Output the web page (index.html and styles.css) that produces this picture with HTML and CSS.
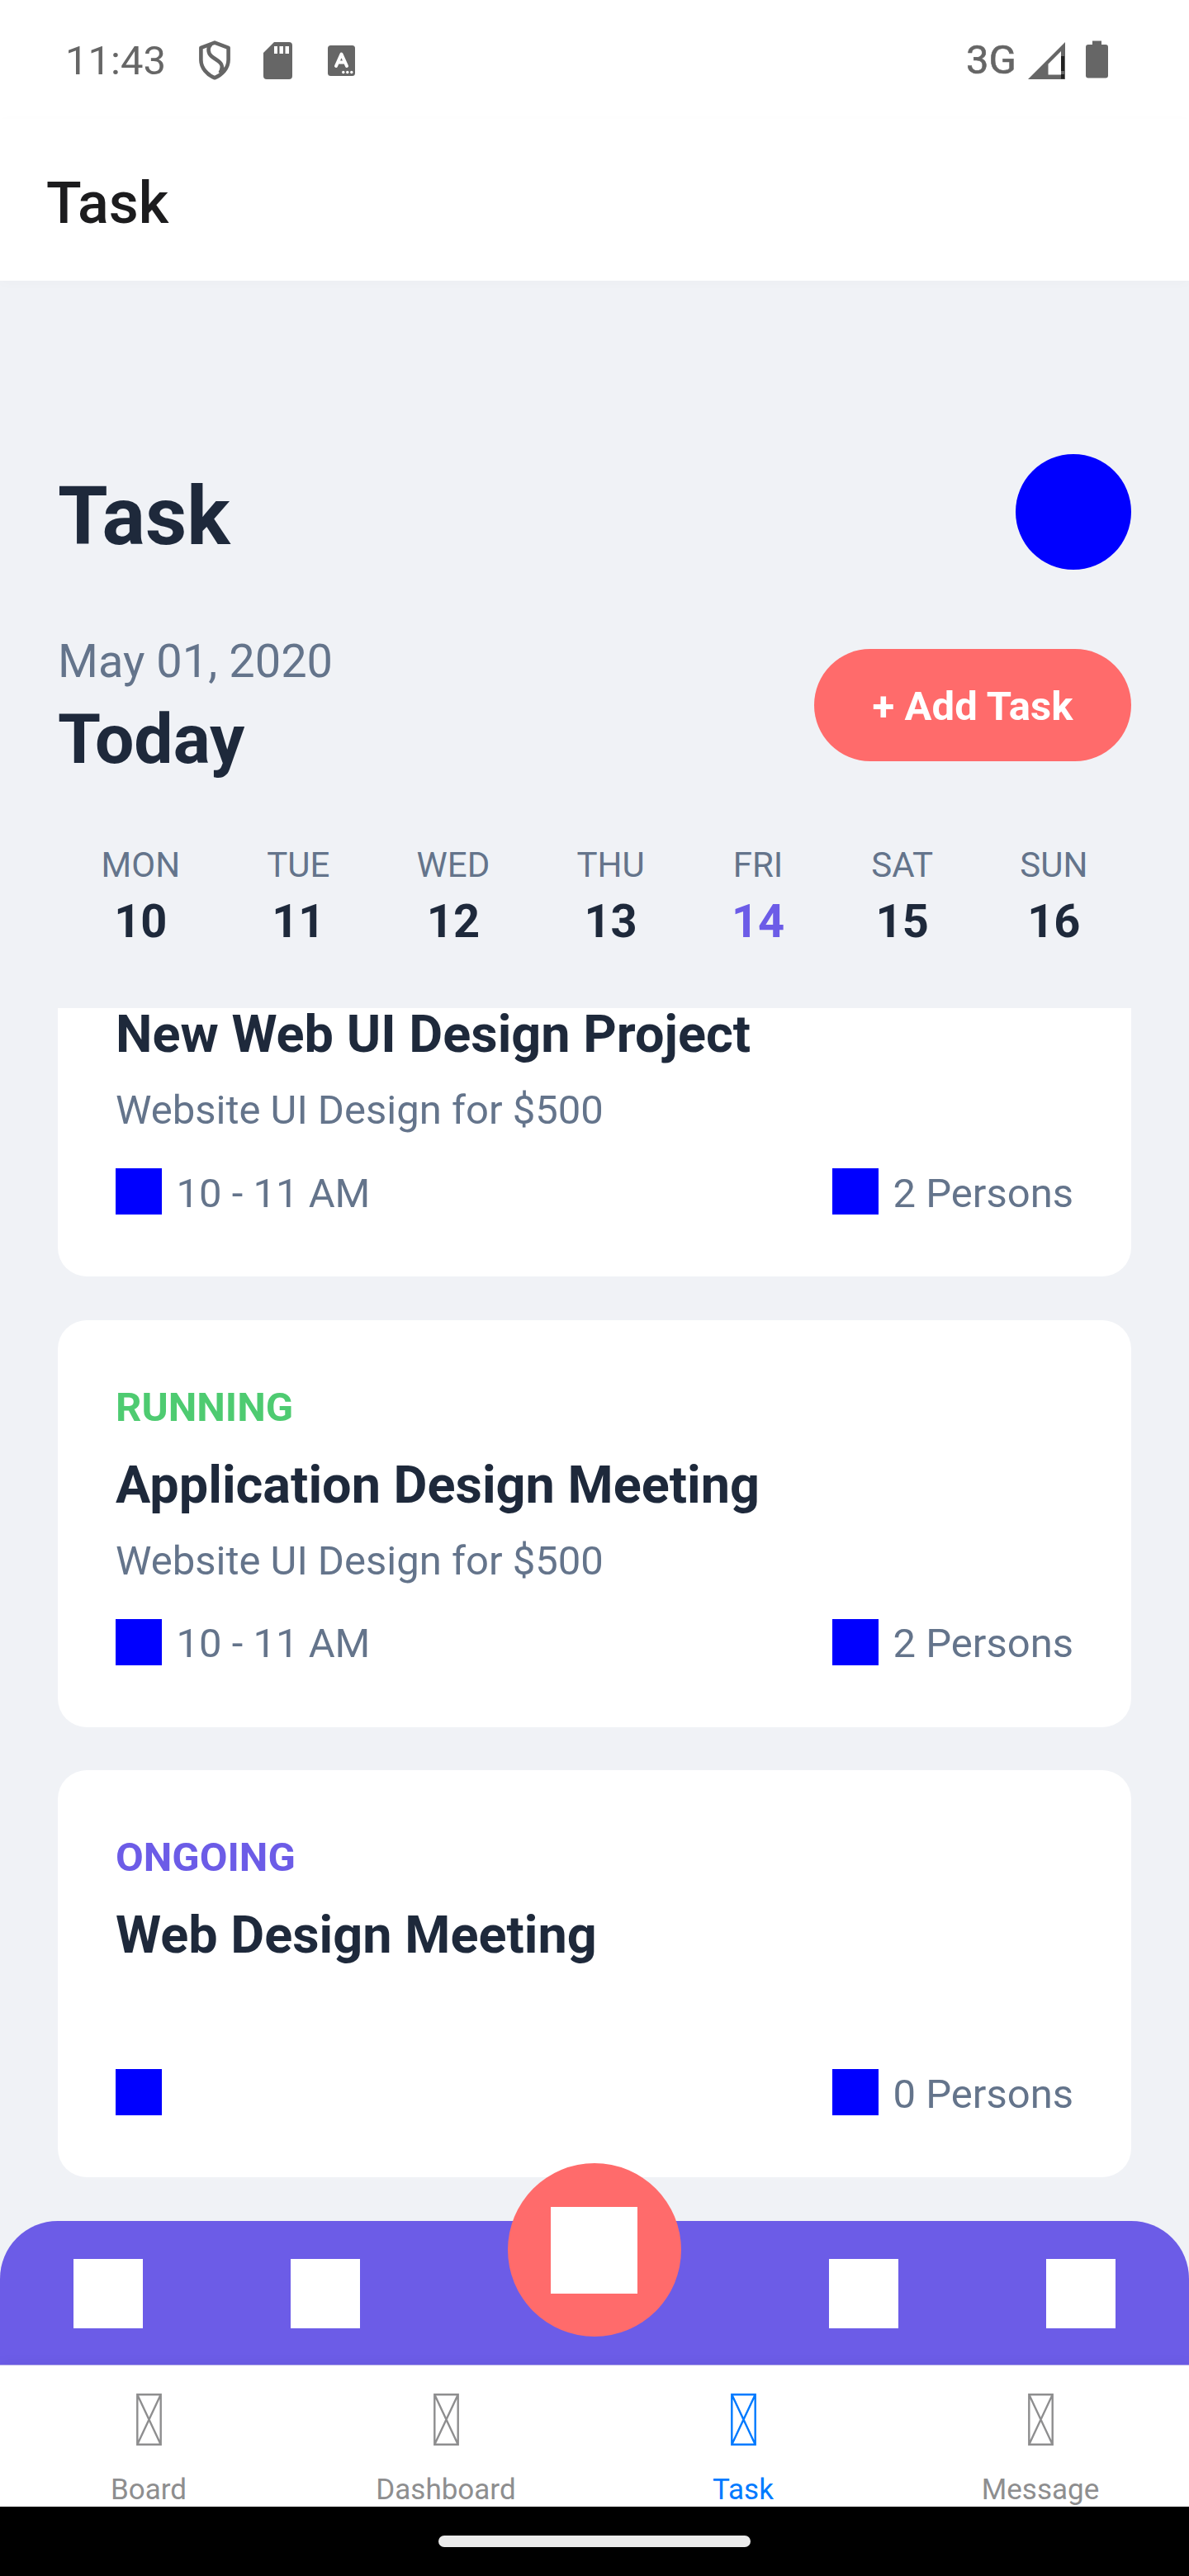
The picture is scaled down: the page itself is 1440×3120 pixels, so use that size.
FILE: index.html
```html
<!DOCTYPE html>
<html lang="en">
<head>
<meta charset="utf-8">
<title>Task</title>
<link rel="stylesheet" href="styles.css">
</head>
<body>
<div class="screen">
  <div class="status-bar">
    <div class="status-left">
      <span class="clock">11:43</span>
      <svg class="icon-shield" width="40" height="48" viewBox="0 0 40 48" fill="none" stroke="#666" stroke-width="4.6" stroke-linejoin="round">
        <path d="M20 2.6 36.6 8.8V23.500C36.600 33.500 29 41.500 20 45.300 11 41.500 3.400 33.500 3.400 23.500V8.800Z"/>
        <path d="M15.500 4.500C11.500 8.500 11.500 15 16 19 20.500 23 27.500 25.500 28.500 30 29.300 33 28.500 36 26.500 39.500M28.500 31.500 30.500 36"/>
      </svg>
      <svg class="icon-sd" width="35" height="45" viewBox="0 0 35 45">
        <path fill="#666" d="M13 0H31Q35 0 35 4V41Q35 45 31 45H4Q0 45 0 41V13Z"/>
        <path fill="#fff" d="M13 5h4v9h-4zM19.500 5h4.500v9h-4.500zM26.500 5h4.500v9h-4.500z"/>
      </svg>
      <svg class="icon-lang" width="33" height="37" viewBox="0 0 33 37">
        <rect width="33" height="37" rx="3.500" fill="#666"/>
        <path d="M10 25 16.500 10.500 23 25M12.500 20.500H20.500" fill="none" stroke="#fff" stroke-width="4" stroke-linecap="round" stroke-linejoin="round"/>
        <g fill="#fff"><circle cx="18.800" cy="32.500" r="1.700"/><circle cx="23.800" cy="32.500" r="1.700"/><circle cx="28.800" cy="32.500" r="1.700"/></g>
      </svg>
    </div>
    <div class="status-right">
      <span class="network">3G</span>
      <svg class="icon-signal" width="45" height="45" viewBox="0 0 45 45">
        <path fill="#666" fill-rule="evenodd" d="M45 0V45H0ZM40 11 24.500 26.500V39.500H40Z"/>
        <path fill="#222" d="M40 17h4v18h-4zM40 39h4v5.500h-4z"/>
      </svg>
      <svg class="icon-battery" width="27" height="46" viewBox="0 0 27 46">
        <path fill="#666" d="M8 0.500H19V5H24Q27 5 27 8V42.500Q27 45.500 24 45.500H3Q0 45.500 0 42.500V8Q0 5 3 5H8Z"/>
      </svg>
    </div>
  </div>
  <header class="app-bar">Task</header>

  <main class="content">
    <div class="title-row">
      <h1>Task</h1>
      <div class="avatar"></div>
    </div>
    <div class="date-row">
      <div class="date-text">
        <div class="date">May 01, 2020</div>
        <div class="today">Today</div>
      </div>
      <div class="add-button">+ Add Task</div>
    </div>
    <div class="week">
      <div class="day"><span class="name">MON</span><span class="number">10</span></div>
      <div class="day"><span class="name">TUE</span><span class="number">11</span></div>
      <div class="day"><span class="name">WED</span><span class="number">12</span></div>
      <div class="day"><span class="name">THU</span><span class="number">13</span></div>
      <div class="day active"><span class="name">FRI</span><span class="number">14</span></div>
      <div class="day"><span class="name">SAT</span><span class="number">15</span></div>
      <div class="day"><span class="name">SUN</span><span class="number">16</span></div>
    </div>
    <div class="task-list">
      <article class="card">
        <div class="state"></div>
        <h2>New Web UI Design Project</h2>
        <p class="details">Website UI Design for $500</p>
        <div class="meta">
          <div class="meta-item"><i class="square"></i><span>10 - 11 AM</span></div>
          <div class="meta-item"><i class="square"></i><span>2 Persons</span></div>
        </div>
      </article>
      <article class="card">
        <div class="state running">RUNNING</div>
        <h2>Application Design Meeting</h2>
        <p class="details">Website UI Design for $500</p>
        <div class="meta">
          <div class="meta-item"><i class="square"></i><span>10 - 11 AM</span></div>
          <div class="meta-item"><i class="square"></i><span>2 Persons</span></div>
        </div>
      </article>
      <article class="card">
        <div class="state ongoing">ONGOING</div>
        <h2>Web Design Meeting</h2>
        <p class="details"></p>
        <div class="meta">
          <div class="meta-item"><i class="square"></i></div>
          <div class="meta-item"><i class="square"></i><span>0 Persons</span></div>
        </div>
      </article>
    </div>
  </main>

  <nav class="action-bar">
    <i class="action"></i>
    <i class="action"></i>
    <div class="fab"><i></i></div>
    <i class="action"></i>
    <i class="action"></i>
  </nav>

  <nav class="tab-bar">
    <div class="tab"><svg width="31" height="63" viewBox="0 0 31 63"><path d="M1.300 1.300H29.700V61.700H1.300ZM1.300 1.300 29.700 61.700M29.700 1.300 1.300 61.700"/></svg><span>Board</span></div>
    <div class="tab"><svg width="31" height="63" viewBox="0 0 31 63"><path d="M1.300 1.300H29.700V61.700H1.300ZM1.300 1.300 29.700 61.700M29.700 1.300 1.300 61.700"/></svg><span>Dashboard</span></div>
    <div class="tab active"><svg width="31" height="63" viewBox="0 0 31 63"><path d="M1.300 1.300H29.700V61.700H1.300ZM1.300 1.300 29.700 61.700M29.700 1.300 1.300 61.700"/></svg><span>Task</span></div>
    <div class="tab"><svg width="31" height="63" viewBox="0 0 31 63"><path d="M1.300 1.300H29.700V61.700H1.300ZM1.300 1.300 29.700 61.700M29.700 1.300 1.300 61.700"/></svg><span>Message</span></div>
  </nav>
  <div class="system-nav"><i></i></div>
</div>
</body>
</html>
```
FILE: styles.css
```css
* {
  box-sizing: border-box;
  margin: 0;
  padding: 0;
}

body {
  background: #f0f2f6;
  font-family: Roboto, "Liberation Sans", sans-serif;
  color: #1e293b;
}

.screen {
  width: 1440px;
  height: 3120px;
  display: flex;
  flex-direction: column;
  overflow: hidden;
}

/* Android status bar */
.status-bar {
  height: 144px;
  padding: 0 98px 0 79px;
  background: #fff;
  display: flex;
  justify-content: space-between;
  color: #666;
}

.status-left,
.status-right {
  height: 146px;
  display: flex;
  align-items: center;
}

.clock,
.network {
  font-size: 49px;
  line-height: 58px;
  padding-top: 2px;
}

.clock {
  width: 121px;
}

.network {
  padding-top: 0;
  margin-right: 14px;
  -webkit-text-stroke: 0.6px #666;
}

.icon-shield {
  margin-left: 40px;
}

.icon-sd {
  margin-left: 39px;
}

.icon-lang {
  margin-left: 43px;
}

.icon-battery {
  margin-left: 25px;
  margin-top: -3px;
}

.app-bar {
  height: 196px;
  padding: 8px 56px 0;
  background: #fff;
  color: #1c1c1e;
  font-size: 70px;
  font-weight: 500;
  line-height: 188px;
  box-shadow: 0 3px 14px rgba(0, 0, 0, 0.02);
}

/* Task screen */
.content {
  height: 2350px;
  padding: 210px 70px 0;
  display: flex;
  flex-direction: column;
}

.title-row {
  height: 140px;
  display: flex;
  justify-content: space-between;
  align-items: center;
}

h1 {
  font-size: 98px;
  font-weight: 700;
  line-height: 116px;
  padding-top: 11px;
}

.avatar {
  width: 140px;
  height: 140px;
  border-radius: 50%;
  background: #00f;
}

.date-row {
  margin-top: 66px;
  height: 196px;
  display: flex;
  justify-content: space-between;
  align-items: center;
}

.date-text {
  padding-bottom: 6px;
}

.date {
  font-size: 56px;
  line-height: 90px;
  color: #64748b;
}

.today {
  font-size: 84px;
  font-weight: 700;
  line-height: 100px;
}

.add-button {
  width: 384px;
  height: 136px;
  padding-top: 2px;
  border-radius: 70px;
  background: #ff6b6b;
  color: #fff;
  font-size: 49px;
  font-weight: 700;
  line-height: 136px;
  letter-spacing: 0.1px;
  text-align: center;
}

.week {
  margin-top: 66px;
  height: 203px;
  display: flex;
  justify-content: space-around;
}

.day {
  display: flex;
  flex-direction: column;
  align-items: center;
}

.name {
  font-size: 42px;
  line-height: 60px;
  color: #64748b;
}

.number {
  font-size: 56px;
  font-weight: 700;
  line-height: 76px;
}

.day.active .number {
  color: #6c5ce7;
}

/* The list is scrolled, so its first card is cut at the top */
.task-list {
  flex: 1;
  min-height: 0;
  display: flex;
  flex-direction: column;
  gap: 52.5px;
  overflow: hidden;
}

.card {
  flex: none;
  height: 493px;
  padding: 70px;
  border-radius: 35px;
  background: #fff;
}

.card:first-child {
  margin-top: -168px;
}

.state {
  height: 72px;
  font-size: 49px;
  font-weight: 700;
  line-height: 72px;
}

.running {
  color: #4ecb71;
}

.ongoing {
  color: #6c5ce7;
}

h2 {
  margin-top: 16px;
  font-size: 63px;
  font-weight: 700;
  line-height: 84px;
}

.details {
  margin-top: 17px;
  height: 66px;
  font-size: 49px;
  line-height: 66px;
  color: #64748b;
}

.meta {
  margin-top: 29.5px;
  height: 71px;
  display: flex;
  justify-content: space-between;
}

.meta-item {
  display: flex;
  align-items: center;
  gap: 17.5px;
  font-size: 49px;
  line-height: 66px;
  color: #64748b;
}

.meta-item span {
  padding-top: 5px;
}

.square {
  width: 56px;
  height: 56px;
  background: #00f;
}

/* Purple action bar with the raised centre button */
.action-bar {
  height: 175px;
  border-radius: 70px 70px 0 0;
  background: #6c5ce7;
  display: flex;
  justify-content: space-around;
  align-items: center;
}

.action {
  width: 84px;
  height: 84px;
  background: #fff;
}

.fab {
  width: 210px;
  height: 210px;
  margin-bottom: 105px;
  border-radius: 50%;
  background: #ff6b6b;
  display: flex;
  justify-content: center;
  align-items: center;
}

.fab i {
  width: 105px;
  height: 105px;
  background: #fff;
}

.tab-bar {
  height: 172px;
  margin-top: -1px;
  border-top: 1px solid #b5aee9;
  background: #fff;
  background-clip: padding-box;
  display: grid;
  grid-template-columns: repeat(4, 1fr);
  box-shadow: 0 -3px 14px rgba(0, 0, 0, 0.04);
}

.tab {
  padding-top: 34px;
  display: flex;
  flex-direction: column;
  align-items: center;
  color: #8e8e8f;
  font-size: 35px;
  line-height: 42px;
}

.tab svg {
  flex: none;
  fill: none;
  stroke: currentColor;
  stroke-width: 2.4;
}

.tab span {
  margin-top: 33px;
}

.tab.active {
  color: #007aff;
}

.system-nav {
  height: 84px;
  background: #000;
  display: flex;
  justify-content: center;
  align-items: center;
}

.system-nav i {
  width: 378px;
  height: 14px;
  border-radius: 7px;
  background: #ebebeb;
}
```
